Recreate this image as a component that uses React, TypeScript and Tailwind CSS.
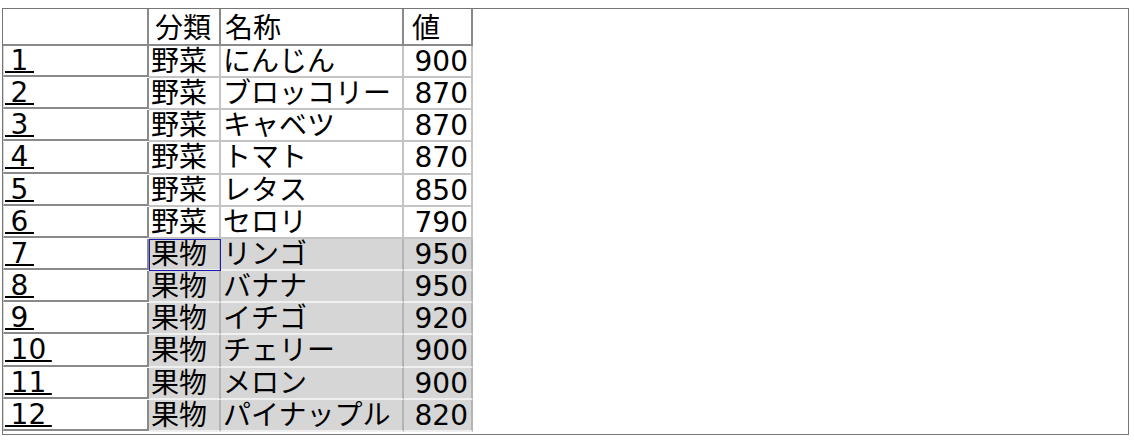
import React from "react";

const rows: [string, string, string, number][] = [
  ["1", "野菜", "にんじん", 900],
  ["2", "野菜", "ブロッコリー", 870],
  ["3", "野菜", "キャベツ", 870],
  ["4", "野菜", "トマト", 870],
  ["5", "野菜", "レタス", 850],
  ["6", "野菜", "セロリ", 790],
  ["7", "果物", "リンゴ", 950],
  ["8", "果物", "バナナ", 950],
  ["9", "果物", "イチゴ", 920],
  ["10", "果物", "チェリー", 900],
  ["11", "果物", "メロン", 900],
  ["12", "果物", "パイナップル", 820],
];

export default function App() {
  return (
    <div className="pt-[8px] pl-[2px] bg-white">
      <div className="w-[1127px] h-[427px] border border-[#767676] font-['DejaVu_Sans','Noto_Sans_CJK_JP',sans-serif] text-[28px] text-black">
        <div className="grid grid-cols-[146px_72px_183px_69px] w-max">
          <div className="h-[37px] border-r-2 border-b-2 border-[#8a8a8a]" />
          <div className="h-[37px] border-r-2 border-b-2 border-[#8a8a8a] pl-[6px] pt-[4px] leading-[31px] whitespace-nowrap">分類</div>
          <div className="h-[37px] border-r-2 border-b-2 border-[#8a8a8a] pl-[4px] pt-[4px] leading-[31px] whitespace-nowrap">名称</div>
          <div className="h-[37px] border-r-2 border-b-2 border-[#8a8a8a] pl-[8px] pt-[4px] leading-[31px]">値</div>
          {rows.map(([n, cat, name, val], i) => {
            const sel = i >= 6;
            const cell = sel
              ? "bg-[#d6d6d6] border-b-2 border-b-[#f0f0f0] border-r-2 border-r-[#b4b4b4]"
              : "bg-white border-b-2 border-b-[#c4c4c4] border-r-2 border-r-[#c4c4c4]";
            return (
              <React.Fragment key={n}>
                <div className="h-[32.17px] pb-[1px]">
                  <div className="h-full border-l border-l-[#d4d4d4] border-r-2 border-r-[#8a8a8a] border-b-2 border-b-[#8a8a8a] pl-[1px] pt-[1px] leading-[27px] whitespace-nowrap">
                    <span className="underline decoration-2 underline-offset-[1px]">{"\u2009" + n + "\u2009"}</span>
                  </div>
                </div>
                <div
                  className={`h-[32.17px] ${cell} pl-[2px] pt-[1px] leading-[29px] whitespace-nowrap ${
                    i === 6 ? "outline outline-1 -outline-offset-1 outline-[#1c1cb0]" : ""
                  }`}
                >
                  {cat}
                </div>
                <div className={`h-[32.17px] ${cell} pl-[2px] pt-[1px] leading-[29px] whitespace-nowrap`}>
                  {name}
                </div>
                <div className={`h-[32.17px] ${cell} pr-[3px] pt-[1px] text-right leading-[29px] whitespace-nowrap`}>
                  {val}
                </div>
              </React.Fragment>
            );
          })}
        </div>
      </div>
    </div>
  );
}
